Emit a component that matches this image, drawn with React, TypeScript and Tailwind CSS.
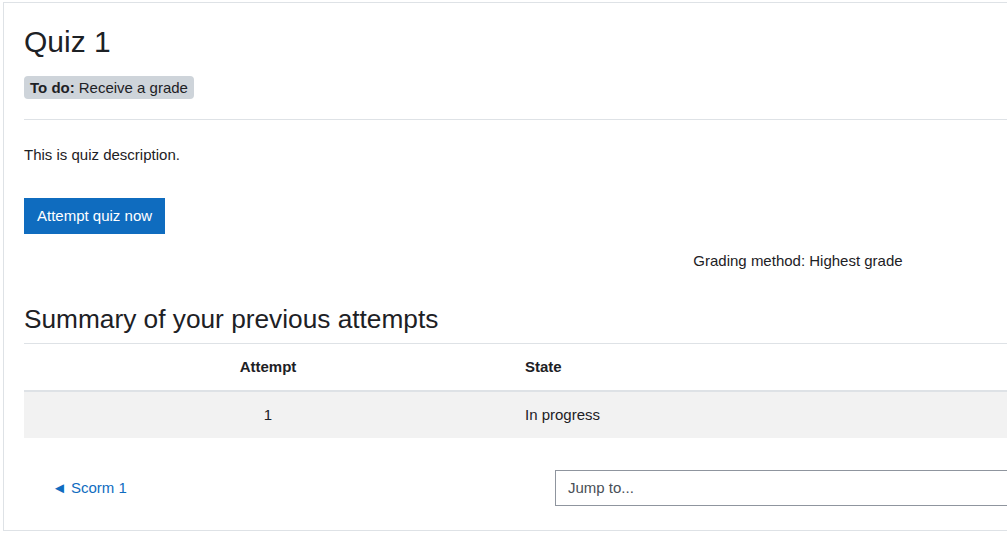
export default function App() {
  return (
    <div className="w-[1007px] h-[543px] overflow-hidden bg-white font-['Liberation_Sans',Arial,sans-serif] text-[15px] text-[#1d2125]">
      <div className="mt-[2px] ml-[3px] w-[1590px] border border-[#dee2e6] px-[20px] pt-[21px] pb-[24px]">
        <h2 className="text-[30px] leading-[36px]">Quiz 1</h2>

        <div className="mt-[16px] flex">
          <span className="h-[23px] flex items-center pt-[1px] px-[6px] rounded-[4px] bg-[#ced4da] text-[15px]">
            <strong className="font-bold mr-[4px]">To do:</strong>Receive a grade
          </span>
        </div>

        <div className="mt-[20px] border-t border-[#dee2e6]" />

        <p className="mt-[24px] leading-[22.5px]">This is quiz description.</p>

        <button className="mt-[31px] h-[36px] pt-[1px] px-[13px] bg-[#0f6cbf] text-white text-[15px]">
          Attempt quiz now
        </button>

        <p className="mt-[16px] leading-[22.5px] text-center">Grading method: Highest grade</p>

        <h3 className="mt-[32px] text-[26.25px] leading-[31.5px]">Summary of your previous attempts</h3>

        <table className="mt-[7px] w-full border-collapse">
          <thead>
            <tr className="border-t border-[#dee2e6] border-b-2">
              <th className="w-[488px] h-[48px] px-[12px] text-center font-bold">Attempt</th>
              <th className="h-[48px] px-[13px] text-left font-bold">State</th>
            </tr>
          </thead>
          <tbody>
            <tr className="bg-[#f2f2f2]">
              <td className="h-[47px] px-[12px] text-center">1</td>
              <td className="h-[47px] px-[13px] text-left">In progress</td>
            </tr>
          </tbody>
        </table>

        <div className="mt-[32px] grid grid-cols-3">
          <div className="flex items-center pl-[28px]">
            <a href="#" className="text-[#0f6cbf]">
              ◄ Scorm 1
            </a>
          </div>
          <div className="px-[15px]">
            <div className="h-[36px] flex items-center px-[12px] border border-[#8f959e] text-[#495057]">
              Jump to...
            </div>
          </div>
          <div />
        </div>
      </div>
    </div>
  );
}
